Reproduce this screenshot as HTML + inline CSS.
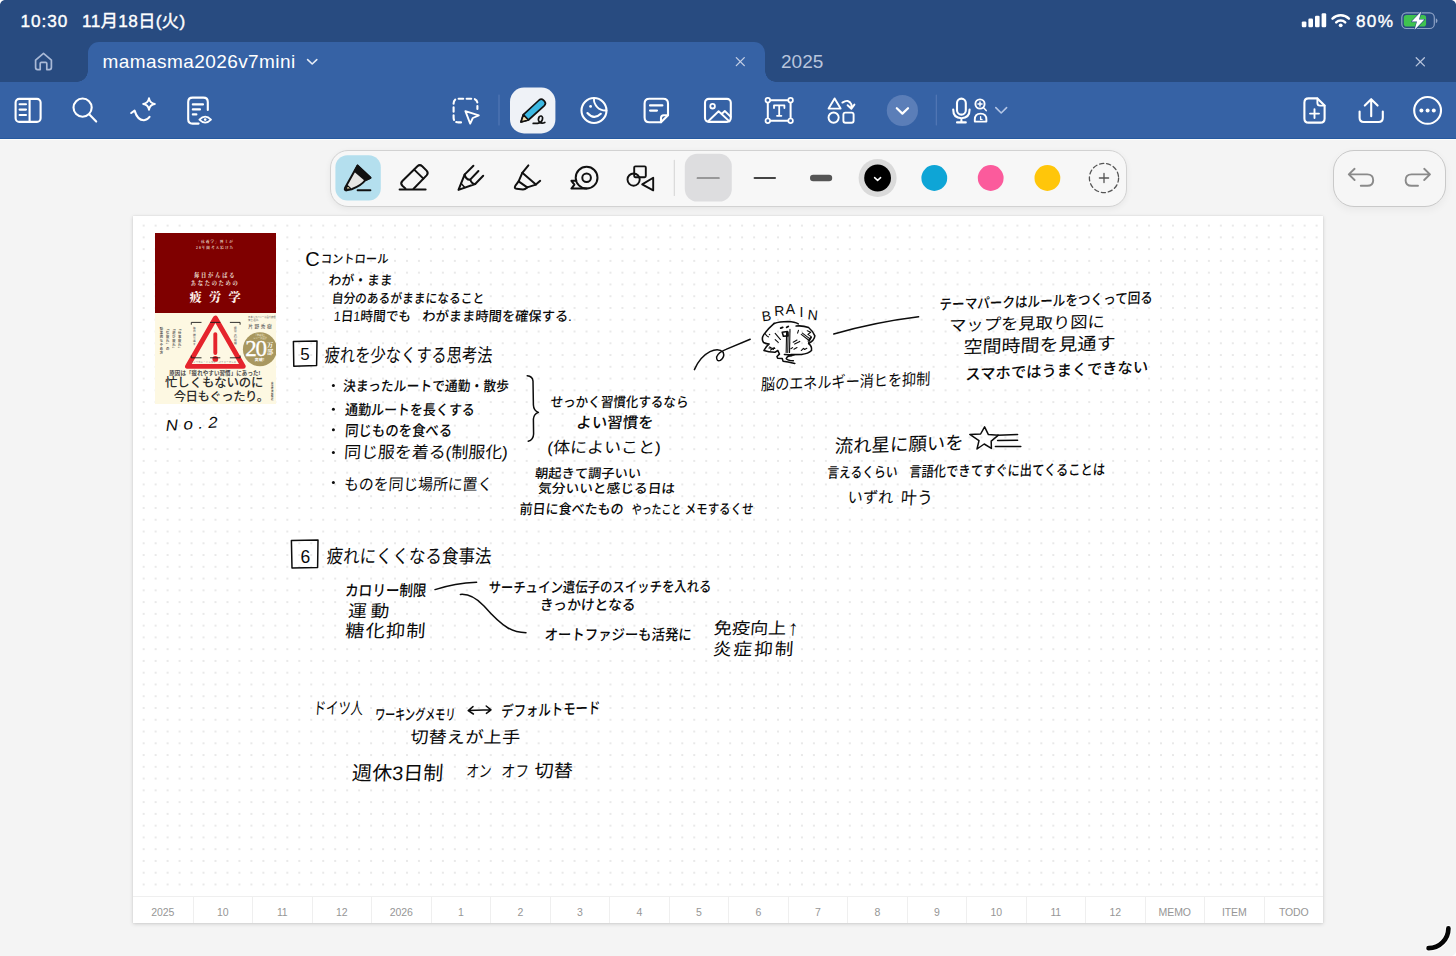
<!DOCTYPE html>
<html lang="ja">
<head>
<meta charset="utf-8">
<title>mamasma2026v7mini</title>
<style>
html,body{margin:0;padding:0}
body{width:1456px;height:956px;position:relative;overflow:hidden;background:#f4f4f4;
 font-family:"Liberation Sans","Noto Sans CJK JP",sans-serif;color:#fff}
.abs{position:absolute}
#status{position:absolute;left:0;top:0;width:1456px;height:42px;background:#284b80}
#tabs{position:absolute;left:0;top:42px;width:1456px;height:40px;background:#284b80}
#toolbar{position:absolute;left:0;top:82px;width:1456px;height:57px;background:#3662a5;border-bottom:1px solid #2559a0;box-sizing:border-box;box-shadow:0 1px 0 #fdfdfb}
#activetab{position:absolute;left:88px;top:0;width:677px;height:40px;background:#3662a5;border-radius:11px 11px 0 0}
#activetab:before,#activetab:after{content:"";position:absolute;bottom:0;width:11px;height:11px;background:radial-gradient(circle at 0 0,rgba(54,98,165,0) 10.5px,#3662a5 11px)}
#activetab:before{left:-11px}
#activetab:after{right:-11px;background:radial-gradient(circle at 100% 0,rgba(54,98,165,0) 10.5px,#3662a5 11px)}
.st{position:absolute;top:10px;font-size:17.2px;line-height:22px;font-weight:400;color:#fff;white-space:nowrap;-webkit-text-stroke:0.4px #fff;letter-spacing:0.9px}
#tabtitle{position:absolute;left:102.6px;top:49px;font-size:19px;line-height:26px;color:#fff;white-space:nowrap;letter-spacing:0.42px}
#tab2{position:absolute;left:781px;top:49px;font-size:19px;line-height:26px;color:#b9c5dc;white-space:nowrap}
svg{position:absolute;overflow:visible}
#pentools{position:absolute;left:330px;top:149.5px;width:797px;height:57px;box-sizing:border-box;background:#f7f7f7;border:1px solid #d2d2d2;border-radius:18px;box-shadow:0 2px 6px rgba(0,0,0,.06)}
#undoredo{position:absolute;left:1333px;top:149.5px;width:113px;height:57px;box-sizing:border-box;background:#f6f6f6;border:1px solid #c9c9c9;border-radius:21px;box-shadow:0 3px 8px rgba(0,0,0,.05)}
#page{position:absolute;left:133px;top:216px;width:1190px;height:707px;background:#fff;box-shadow:0 1px 4px rgba(0,0,0,.16),0 0 1px rgba(0,0,0,.12)}
#dots{position:absolute;left:0;top:0;width:1190px;height:675px;
 background-image:radial-gradient(circle,#d9d9d9 0.45px,rgba(217,217,217,0) 1.05px);background-size:11.976px 11.766px;background-position:4.7px 3.72px}
#months{position:absolute;left:0;top:680px;width:1190px;height:27px;border-top:1px solid #efefef;display:flex;box-sizing:border-box}
#months div{flex:0 0 59.5px;box-sizing:border-box;border-left:1px solid #efefef;text-align:center;font-size:10.5px;line-height:30px;color:#969696;letter-spacing:-0.1px}
#months div:first-child{border-left:0}

#cover{position:absolute;left:21.7px;top:17px;width:120.9px;height:171px;background:#fdf8e2;overflow:hidden;font-family:"Liberation Sans","Noto Sans CJK JP",sans-serif}
#cover .cr{position:absolute;left:0;top:0;width:100%;height:79.6px;background:#7f0000}
#cover .ct{position:absolute;left:0;width:100%;text-align:center;white-space:nowrap;line-height:1.2;font-family:"Liberation Serif","Noto Serif CJK JP",serif}
#cover .cl{position:absolute;white-space:nowrap;line-height:1.2}
#cover .cv{position:absolute;writing-mode:vertical-rl;white-space:nowrap;line-height:1;color:#555;font-weight:700}
</style>
</head>
<body>
<div id="status"></div>
<div id="tabs"><div id="activetab"></div></div>
<div id="toolbar"></div>
<div class="st" style="left:20.6px">10:30</div>
<div class="st" style="left:82px;letter-spacing:0.4px">11月18日(火)</div>
<div class="st" style="left:1356px;letter-spacing:1.3px">80%</div>
<div id="tabtitle">mamasma2026v7mini</div>
<div id="tab2">2025</div>

<!-- status right -->
<svg style="left:1300px;top:10px" width="140" height="22" viewBox="1300 10 140 22">
 <g fill="#fff">
  <rect x="1301.8" y="21.4" width="4.6" height="5.8" rx="1.2"/>
  <rect x="1308.4" y="18.5" width="4.6" height="8.7" rx="1.2"/>
  <rect x="1315" y="15.7" width="4.6" height="11.5" rx="1.2"/>
  <rect x="1321.6" y="13.2" width="4.6" height="14" rx="1.2"/>
  <circle cx="1340.7" cy="25.3" r="1.9"/>
 </g>
 <g fill="none" stroke="#fff" stroke-width="2.5" stroke-linecap="round">
  <path d="M1332.5 18.6 A11.6 11.6 0 0 1 1348.9 18.6"/>
  <path d="M1336.2 22.3 A6.4 6.4 0 0 1 1345.2 22.3"/>
 </g>
 <rect x="1401.8" y="12.9" width="32.5" height="15.6" rx="4.6" fill="none" stroke="#8fa3c6" stroke-width="1.2"/>
 <path d="M1435.8 18.2 q1.7 .6 1.7 2.5 t-1.7 2.5z" fill="#8fa3c6"/>
 <rect x="1403.8" y="14.9" width="22.3" height="11.6" rx="2.8" fill="#3fc34f"/>
 <path d="M1421.2 11.6 L1411.6 21.6 L1417 21.6 L1414.6 29.8 L1424.4 19.6 L1419 19.6 Z" fill="#fff" stroke="#284b80" stroke-width="1.1" stroke-linejoin="round" paint-order="stroke"/>
</svg>
<!-- tab bar icons -->
<svg style="left:30px;top:48px" width="28" height="28" viewBox="30 48 28 28" fill="none" stroke="#a9b9d6" stroke-width="1.7" stroke-linecap="round" stroke-linejoin="round">
 <path d="M35.6 60.2 L43.5 53.4 L51.4 60.2 V67.6 Q51.4 69.6 49.4 69.6 H46.8 V63.6 Q46.8 62.4 45.6 62.4 H41.4 Q40.2 62.4 40.2 63.6 V69.6 H37.6 Q35.6 69.6 35.6 67.6 Z"/>
</svg>
<svg style="left:300px;top:50px" width="24" height="24" viewBox="300 50 24 24" fill="none" stroke="#e6ecf6" stroke-width="1.6" stroke-linecap="round" stroke-linejoin="round">
 <path d="M307.6 59.6 L312.2 64 L316.8 59.6"/>
</svg>
<svg style="left:730px;top:52px" width="20" height="20" viewBox="730 52 20 20" fill="none" stroke="#c5d0e6" stroke-width="1.3" stroke-linecap="round">
 <path d="M736.3 57.6 L744.3 65.6 M744.3 57.6 L736.3 65.6"/>
</svg>
<svg style="left:1410px;top:52px" width="20" height="20" viewBox="1410 52 20 20" fill="none" stroke="#b9c5dc" stroke-width="1.3" stroke-linecap="round">
 <path d="M1416.2 57.7 L1424.4 65.9 M1424.4 57.7 L1416.2 65.9"/>
</svg>
<!-- toolbar icons -->
<svg style="left:0;top:82px" width="1456" height="56" viewBox="0 82 1456 56" fill="none" stroke="#fff" stroke-width="2.1" stroke-linecap="round" stroke-linejoin="round">
 <!-- sidebar -->
 <rect x="15.6" y="98.9" width="25" height="23" rx="3.6"/>
 <path d="M29.6 99 V122 M19.6 104.2 H26 M19.6 109.6 H26 M19.6 115 H26"/>
 <!-- search -->
 <circle cx="82.6" cy="107.6" r="9.1"/>
 <path d="M89.4 114.6 L96.2 121.6"/>
 <!-- ai smile -->
 <path d="M131.2 113 L134.6 110.6 Q137.6 120.4 144 120.2 Q147.6 120 149.6 116.8"/>
 <path d="M149 98.2 Q149.8 103.2 154.8 104 Q149.8 104.8 149 109.8 Q148.2 104.8 143.2 104 Q148.2 103.2 149 98.2Z" stroke-width="1.9"/>
 <!-- doc eye -->
 <path d="M198.6 123.6 H192.6 Q188.2 123.6 188.2 119.2 V102 Q188.2 97.6 192.6 97.6 H203.4 Q207.8 97.6 207.8 102 V110"/>
 <path d="M192.8 104.4 H203 M192.8 109.4 H200 M192.8 114.4 H196.4"/>
 <path d="M199.4 119.6 Q205.2 113.6 211 119.6 Q205.2 125.6 199.4 119.6Z" stroke-width="1.8"/>
 <circle cx="205.2" cy="119.6" r="1.3" fill="#fff" stroke="none"/>
 <!-- lasso select -->
 <path d="M461 122.4 H458.4 Q453.6 122.4 453.6 117.6 V103.6 Q453.6 98.8 458.4 98.8 H472.6 Q477.4 98.8 477.4 103.6 V109" stroke-dasharray="4.6 3.4"/>
 <path d="M465.4 111.2 L478.8 115.4 L472.8 118 L470.2 123.6 Z" stroke-width="1.9"/>
 <!-- separators -->
 <path d="M499 95 V125" stroke="#5579b6" stroke-width="1.1"/>
 <path d="M936.3 95 V125" stroke="#5579b6" stroke-width="1.1"/>
 <!-- selected pen bg -->
 <rect x="510" y="87.6" width="45.4" height="45.8" rx="14" fill="#eff2f7" stroke="none"/>
 <!-- sticker -->
 <circle cx="594" cy="110.5" r="12.5"/>
 <path d="M594 98.2 C593.4 105 599 111 606.4 110.5" stroke-width="1.9"/>
 <path d="M587.4 113 Q594 120.4 600.8 113.8"/>
 <circle cx="590.6" cy="106.4" r="1.4" fill="#fff" stroke="none"/>
 <!-- note -->
 <path d="M661 122.2 H649.4 Q644.6 122.2 644.6 117.4 V103.6 Q644.6 98.8 649.4 98.8 H663.2 Q668 98.8 668 103.6 V115.2 Z"/>
 <path d="M661 122.2 V118 Q661 115.2 663.8 115.2 H668" />
 <path d="M650 105.4 H662.4 M650 110.6 H657"/>
 <!-- image -->
 <rect x="705" y="98.9" width="25.8" height="23" rx="3.8"/>
 <circle cx="712.6" cy="106.2" r="2.3" stroke-width="1.8"/>
 <path d="M708.2 121.2 L718.6 111.2 L729.4 121.4 M721.6 114 L724.8 111 L730.6 116.6" stroke-width="1.9"/>
 <!-- text box -->
 <rect x="767.8" y="100.2" width="22.8" height="20.6" stroke-width="2"/>
 <g fill="#3662a5" stroke-width="1.7"><circle cx="767.8" cy="100.2" r="2.3"/><circle cx="790.6" cy="100.2" r="2.3"/><circle cx="767.8" cy="120.8" r="2.3"/><circle cx="790.6" cy="120.8" r="2.3"/></g>
 <path d="M774 108 V105.4 H784.4 V108 M779.2 105.4 V115.8 M777 115.8 H781.4" stroke-width="1.8"/>
 <!-- shapes -->
 <path d="M834.6 98.4 L840.6 108.6 H828.6 Z" stroke-width="1.9"/>
 <circle cx="833.6" cy="117.6" r="5.1" stroke-width="1.9"/>
 <rect x="843.4" y="112.6" width="10.2" height="10.2" rx="2" stroke-width="1.9"/>
 <path d="M842.4 102.6 Q848.6 98.4 851.4 104.4 L851.6 108 M847.6 105.2 L851.4 108.8 L854.4 104.6" stroke-width="1.9"/>
 <!-- more tools circle -->
 <circle cx="902.4" cy="110.5" r="15.6" fill="#5b7eb8" stroke="none"/>
 <path d="M896.8 108.2 L902.4 113.6 L908 108.2" stroke-width="2.2"/>
 <!-- mic -->
 <rect x="957" y="98.6" width="8.8" height="16" rx="4.4"/>
 <path d="M953.2 109.6 Q953.2 118.2 961.4 118.2 Q969.6 118.2 969.6 109.6 M961.4 118.4 V122.2 M957 122.4 H965.8"/>
 <!-- person search -->
 <circle cx="980" cy="104" r="4.6" stroke-width="1.9"/>
 <path d="M983.4 107.6 L986.2 110.6 M978 104 H982 M980 102 V106" stroke-width="1.5"/>
 <path d="M974.8 121.6 V119.6 Q974.8 113.6 980.6 113.6 Q986.4 113.6 986.4 119.6 V121.6 Z" stroke-width="1.9"/>
 <path d="M980.6 116.6 V119.4 H982" stroke-width="1.3"/>
 <path d="M995.8 107.6 L1001.2 113 L1006.6 107.6" stroke="#b4c6e6" stroke-width="1.6"/>
 <!-- new page -->
 <path d="M1317.4 98.4 H1308.6 Q1304.4 98.4 1304.4 102.6 V118.4 Q1304.4 122.6 1308.6 122.6 H1320.4 Q1324.6 122.6 1324.6 118.4 V105.6 Z"/>
 <path d="M1317.4 98.4 V103 Q1317.4 105.6 1320 105.6 H1324.6" stroke-width="1.9"/>
 <path d="M1310 113.6 H1319 M1314.5 109.1 V118.1" stroke-width="1.9"/>
 <!-- share -->
 <path d="M1359.6 111.6 V117.8 Q1359.6 122 1363.8 122 H1378.6 Q1382.8 122 1382.8 117.8 V111.6"/>
 <path d="M1371.2 116.2 V99.4 M1364.8 105.6 L1371.2 99.2 L1377.6 105.6"/>
 <!-- more -->
 <circle cx="1427.6" cy="110.4" r="13.4"/>
 <g fill="#fff" stroke="none"><circle cx="1421.4" cy="110.4" r="2"/><circle cx="1427.6" cy="110.4" r="2"/><circle cx="1433.8" cy="110.4" r="2"/></g>
</svg>
<!-- selected pen icon (toolbar) -->
<svg style="left:510px;top:87px" width="46" height="47" viewBox="510 87 46 47" fill="none" stroke="#111" stroke-width="1.7" stroke-linecap="round" stroke-linejoin="round">
 <path d="M521 122 L523.4 114.6 L539.2 100 Q541.4 98.2 543.4 100.2 L544.6 101.4 Q546.4 103.6 544.4 105.6 L528.4 120 Z" fill="#3db9e3"/>
 <path d="M523.4 114.6 L528.4 120 L521 122 Z" fill="#f3dfae"/>
 <path d="M533.2 123.4 H537.6 Q542.8 122.4 542.6 117.8 Q541.6 114.8 539.2 116.8 Q537.4 119.8 539.6 122.2 Q541.8 123.8 544.8 122.4"/>
</svg>

<div id="pentools"></div>
<div id="undoredo"></div>

<svg style="left:330px;top:149px" width="800" height="58" viewBox="330 149 800 58" fill="none" stroke="#111" stroke-width="2" stroke-linecap="round" stroke-linejoin="round">
 <!-- selected pen bg -->
 <rect x="335.4" y="155.2" width="45.4" height="45.4" rx="12" fill="#b4dfee" stroke="none"/>
 <!-- pen -->
 <path d="M357.6 165.6 L370.4 177.8 L365.4 180 Q361.6 185.4 351.6 189.2 L346.4 190.4 Q344.2 190.2 345 188 Z" fill="#e6e6e4"/>
 <path d="M357.6 165.6 L370.4 177.8 L365.6 180.2 L354.8 171 Z" fill="#111"/>
 <path d="M345.8 189.6 L347.6 185.6 L350.6 188.4 Z" fill="#f3e3b5" stroke-width="1.2"/>
 <path d="M357.6 190.2 H370.4" stroke-width="1.9"/>
 <!-- eraser -->
 <path d="M405.4 188.6 L402.4 185.8 Q400 183.4 402.4 181 L417.4 166.2 Q419.8 164 422.2 166.2 L426.6 170.6 Q428.8 173 426.6 175.4 L413.6 188.8"/>
 <path d="M414.2 169.6 L423.4 178.6"/>
 <path d="M399.6 189.5 H425.6"/>
 <!-- pencil -->
 <path d="M464.6 174.6 L473.4 165.8 M470.2 179.6 L478.4 171 M475.2 184 L483.2 175.8"/>
 <path d="M464.6 174.6 L458.5 189.9 L475.2 184 Q472.2 184.6 470.2 179.6 Q466.4 180.2 464.6 174.6"/>
 <path d="M461.2 183.4 L464.8 187.4" stroke-width="1.5"/>
 <!-- highlighter -->
 <path d="M528.4 165.4 L522.3 172.8 L535.9 184.6 L540.2 180.8"/>
 <path d="M522.3 172.8 L518.6 181.4 L527.2 187.4 L535.9 184.6"/>
 <path d="M518.6 181.4 L515.4 185.6 Q513.8 188.6 516.6 188.8 L523 189.4 Q525 189.4 527.2 187.4"/>
 <!-- tape -->
 <circle cx="586.6" cy="177.7" r="10.9"/>
 <circle cx="586.6" cy="177.7" r="4.3"/>
 <path d="M586.6 188.6 H571.4 L574.4 184.6 L571.4 180.8 H576.2"/>
 <!-- shapes -->
 <rect x="634.2" y="166.4" width="11.6" height="10.8" rx="1.2" stroke-width="1.9"/>
 <circle cx="633.6" cy="179.6" r="6.1" stroke-width="1.9"/>
 <path d="M653.2 177.8 V190.4 L642.2 184.4 Z" stroke-width="1.9"/>
 <!-- separator -->
 <path d="M674.3 160.4 V195.4" stroke="#d6d6d6" stroke-width="1.1"/>
 <!-- stroke widths -->
 <rect x="684.8" y="153.8" width="47" height="47.8" rx="12.5" fill="#dddddf" stroke="none"/>
 <path d="M697.2 178 H719.2" stroke="#555" stroke-width="1.1"/>
 <path d="M754.6 178 H775" stroke="#444" stroke-width="2.1"/>
 <path d="M813.2 178 H829" stroke="#555" stroke-width="6.4"/>
 <!-- colours -->
 <circle cx="877.6" cy="178" r="19" fill="#dadada" stroke="none"/>
 <circle cx="877.6" cy="178" r="13.4" fill="#000" stroke="none"/>
 <path d="M874.6 177.6 L877.6 180.4 L880.6 177.6" stroke="#fff" stroke-width="1.5"/>
 <circle cx="934.3" cy="178" r="12.9" fill="#0ea5d6" stroke="none"/>
 <circle cx="990.7" cy="178" r="12.9" fill="#fb5b9c" stroke="none"/>
 <circle cx="1047.4" cy="178" r="12.9" fill="#ffc60a" stroke="none"/>
 <circle cx="1104" cy="178" r="14.6" stroke="#555" stroke-width="1.3" stroke-dasharray="4.2 2.9"/>
 <path d="M1099.4 178 H1108.6 M1104 173.4 V182.6" stroke="#555" stroke-width="1.3"/>
</svg>
<svg style="left:1333px;top:149px" width="114" height="58" viewBox="1333 149 114 58" fill="none" stroke="#8a8a8a" stroke-width="1.9" stroke-linecap="round" stroke-linejoin="round">
 <path d="M1354.6 168.8 L1348.8 174.4 L1354.6 180 M1349.4 174.4 H1367.2 Q1373.2 174.4 1373.2 180.2 Q1373.2 185.8 1367.2 185.8 H1360.8"/>
 <path d="M1424.2 168.8 L1430 174.4 L1424.2 180 M1429.4 174.4 H1411.6 Q1405.6 174.4 1405.6 180.2 Q1405.6 185.8 1411.6 185.8 H1418"/>
</svg>

<div id="page">
 <div id="dots"></div>
 <div id="cover">
  <div class="cr"></div>
  <div class="ct" style="top:7.4px;font-size:3.6px;letter-spacing:1.1px;color:#e9d9c9;font-weight:700">「休養学」博士が</div>
  <div class="ct" style="top:12.8px;font-size:3.6px;letter-spacing:1.05px;color:#e9d9c9;font-weight:700">20年間考え続けた</div>
  <div class="ct" style="top:39.4px;font-size:5.2px;letter-spacing:1.85px;color:#e6d5c6;font-weight:900">毎日がんばる</div>
  <div class="ct" style="top:46.8px;font-size:5.2px;letter-spacing:1.75px;color:#e6d5c6;font-weight:900">あなたのための</div>
  <div class="ct" style="top:58.4px;font-size:12.2px;letter-spacing:7.4px;color:#fbeee6;font-weight:900;text-indent:7.4px">疲労学</div>
  <svg style="left:0;top:79.5px" width="121" height="92" viewBox="154.7 312.5 121 92">
   <circle cx="259.6" cy="348.8" r="17" fill="#a8975f"/>
   <path d="M215.1 317.6 L187.2 365.9 H243 Z" fill="#fdf8e4" stroke="#e5242c" stroke-width="4.9" stroke-linejoin="round"/>
   <path d="M215 333.6 V352.6" stroke="#e5242c" stroke-width="3.9" stroke-linecap="round"/>
   <circle cx="215" cy="358.4" r="2.9" fill="#e5242c"/>
   <g fill="none" stroke="#1a1a1a" stroke-width="0.9">
    <path d="M191 324.2 V321.9 H201.2 M209.8 321.9 H220 M229.6 321.9 H239.8 V324.2"/>
    <path d="M191 355 V357.3 H201.2 M209.8 357.3 H220 M229.6 357.3 H239.8 V355"/>
   </g>
  </svg>
  <div class="cv" style="left:4px;top:94.2px;font-size:3.3px;letter-spacing:.7px;height:40px">効果的なやめ方</div>
  <div class="cv" style="left:10.2px;top:94.2px;font-size:3.3px;letter-spacing:.7px;height:40px">「気疲れ」の</div>
  <div class="cv" style="left:16.3px;top:94.2px;font-size:3.3px;letter-spacing:.7px;height:40px">「遊び疲れ」</div>
  <div class="cv" style="left:22.2px;top:94.2px;font-size:3.3px;letter-spacing:.7px;height:40px">「仕事疲れ」</div>
  <div class="cv" style="left:37px;top:94.4px;font-size:2.7px;letter-spacing:.4px;height:24px;color:#777">毎日繰り返す</div>
  <div class="cv" style="left:78px;top:94.4px;font-size:2.7px;letter-spacing:.4px;height:24px;color:#777">疲労の2段階</div>
  <div class="cl" style="left:93.4px;top:82.6px;font-size:2.3px;line-height:3px;color:#666;width:27px">日本リカバリー協会代表理事<br>博士(医学)</div>
  <div class="cl" style="left:93.6px;top:90.6px;font-size:4.7px;letter-spacing:1.55px;color:#666;font-weight:500">片野秀樹</div>
  <div class="cl" style="left:95.4px;top:100.6px;font-size:2.3px;line-height:3.2px;color:#f5efdc;width:20px;text-align:center">『休養学』<br>シリーズ累計</div>
  <div class="cl" style="left:90.6px;top:103.9px;font-size:23px;line-height:23px;-webkit-text-stroke:.3px #fff;color:#fff;font-family:'Liberation Serif','Noto Serif CJK JP',serif;letter-spacing:-1.4px">20</div>
  <div class="cl" style="left:112.4px;top:108px;font-size:6.2px;line-height:7.2px;color:#fff;font-weight:700;font-family:'Liberation Serif','Noto Serif CJK JP',serif;width:5px">万<br>部</div>
  <div class="cl" style="left:100px;top:124.6px;font-size:3.9px;color:#fff;font-weight:700;letter-spacing:.3px">突破!</div>
  <div class="cl" style="left:36px;top:128.4px;font-size:2.2px;color:#666;letter-spacing:.35px">フィジカル・メンタル・パフォーマンス</div>
  <div class="cl" style="left:14.6px;top:136.4px;font-size:5.5px;line-height:8px;letter-spacing:.08px;color:#4a4a4a;font-weight:700">原因は「疲れやすい習慣」にあった!</div>
  <div class="cl" style="left:10.4px;top:143.4px;font-size:12.4px;line-height:15px;letter-spacing:-.1px;color:#2b2b2b;font-weight:500">忙しくもないのに</div>
  <div class="cl" style="left:19px;top:157.2px;font-size:12.4px;line-height:15px;letter-spacing:-.5px;color:#2b2b2b;font-weight:500">今日もぐったり。</div>
  <div class="cv" style="left:115px;top:149.4px;font-size:2.4px;letter-spacing:.2px;height:22px;color:#555">東洋経済新報社</div>
 </div>
 <div id="months"><div>2025</div><div>10</div><div>11</div><div>12</div><div>2026</div><div>1</div><div>2</div><div>3</div><div>4</div><div>5</div><div>6</div><div>7</div><div>8</div><div>9</div><div>10</div><div>11</div><div>12</div><div>MEMO</div><div>ITEM</div><div>TODO</div></div>
</div>
<div style="position:absolute;left:0;top:0;width:5px;height:5px;background:radial-gradient(circle at 100% 100%,rgba(255,255,255,0) 4.5px,#fff 5.3px)"></div>
<div style="position:absolute;left:1451px;top:0;width:5px;height:5px;background:radial-gradient(circle at 0 100%,rgba(255,255,255,0) 4.5px,#fff 5.3px)"></div>
<div style="position:absolute;left:1451px;top:951px;width:5px;height:5px;background:radial-gradient(circle at 0 0,rgba(255,255,255,0) 4.5px,#fff 5.3px)"></div>
<svg style="left:1416px;top:916px" width="40" height="40" viewBox="1416 916 40 40" fill="none" stroke-linecap="round">
 <path d="M1428.6 948.2 A20 20 0 0 0 1448.4 928.4" stroke="#fff" stroke-width="6.6"/>
 <path d="M1428.6 948.2 A20 20 0 0 0 1448.4 928.4" stroke="#050505" stroke-width="4.7"/>
</svg>
<!--INK-START-->
<svg id="ink" style="left:0;top:0" width="1456" height="956" viewBox="0 0 1456 956">
<g font-family="'Liberation Sans','Noto Sans CJK JP',sans-serif" font-weight="500" fill="#0a0a0a">
<text transform="translate(305.2 266.0)" font-size="20" font-weight="400">C</text>
<text transform="translate(320.5 263.4) skewX(-4)" font-size="11.8" textLength="67.7" lengthAdjust="spacingAndGlyphs">コントロール</text>
<text transform="translate(328.3 284.6) skewX(-4)" font-size="13.5" textLength="63.9" lengthAdjust="spacingAndGlyphs">わが・まま</text>
<text transform="translate(331.4 302.6) skewX(-4)" font-size="13.2" textLength="152.5" lengthAdjust="spacingAndGlyphs">自分のあるがままになること</text>
<text transform="translate(333.4 321.2) skewX(-4)" font-size="13.6" textLength="77.3" lengthAdjust="spacingAndGlyphs">1日1時間でも</text>
<text transform="translate(422.0 321.2) skewX(-4)" font-size="13.6" textLength="149.6" lengthAdjust="spacingAndGlyphs">わがまま時間を確保する.</text>
<text transform="translate(300.2 360.4)" font-size="17" font-weight="400">5</text>
<text transform="translate(324.2 362.4) skewX(-4)" font-size="19" textLength="167.8" lengthAdjust="spacingAndGlyphs" font-weight="400">疲れを少なくする思考法</text>
<text transform="translate(342.7 391.0) skewX(-4)" font-size="14" textLength="165.8" lengthAdjust="spacingAndGlyphs">決まったルートで通勤・散歩</text>
<text transform="translate(344.7 414.6) skewX(-4)" font-size="14.5" textLength="129.8" lengthAdjust="spacingAndGlyphs">通勤ルートを長くする</text>
<text transform="translate(344.7 436.2) skewX(-4)" font-size="15" textLength="107.2" lengthAdjust="spacingAndGlyphs">同じものを食べる</text>
<text transform="translate(343.7 458.0) skewX(-4)" font-size="16.5" textLength="163.8" lengthAdjust="spacingAndGlyphs" font-weight="400">同じ服を着る(制服化)</text>
<text transform="translate(343.7 489.6) skewX(-4)" font-size="16" textLength="148.3" lengthAdjust="spacingAndGlyphs" font-weight="400">ものを同じ場所に置く</text>
<text transform="translate(550.2 407.2) skewX(-4)" font-size="14" textLength="138.0" lengthAdjust="spacingAndGlyphs">せっかく習慣化するなら</text>
<text transform="translate(576.0 428.0) skewX(-4)" font-size="15.5" textLength="77.2" lengthAdjust="spacingAndGlyphs">よい習慣を</text>
<text transform="translate(547.0 452.6) skewX(-4)" font-size="16" textLength="113.4" lengthAdjust="spacingAndGlyphs" font-weight="400">(体によいこと)</text>
<text transform="translate(534.7 478.0) skewX(-4)" font-size="13" textLength="106.1" lengthAdjust="spacingAndGlyphs">朝起きて調子いい</text>
<text transform="translate(537.8 493.0) skewX(-4)" font-size="13" textLength="137.0" lengthAdjust="spacingAndGlyphs">気分いいと感じる日は</text>
<text transform="translate(519.3 513.6) skewX(-4)" font-size="14" textLength="104.0" lengthAdjust="spacingAndGlyphs">前日に食べたもの</text>
<text transform="translate(631.6 513.6) skewX(-4)" font-size="13" textLength="49.4" lengthAdjust="spacingAndGlyphs">やったこと</text>
<text transform="translate(684.4 513.6) skewX(-4)" font-size="14" textLength="68.7" lengthAdjust="spacingAndGlyphs">メモするくせ</text>
<text transform="translate(760.8 390.2) rotate(-1.90) skewX(-4)" font-size="16" textLength="169.3" lengthAdjust="spacingAndGlyphs" font-weight="400">脳のエネルギー消ヒを抑制</text>
<text transform="translate(939.2 309.8) rotate(-1.88) skewX(-4)" font-size="14.5" textLength="213.6" lengthAdjust="spacingAndGlyphs">テーマパークはルールをつくって回る</text>
<text transform="translate(948.8 331.2) rotate(-1.47) skewX(-4)" font-size="16" textLength="155.9" lengthAdjust="spacingAndGlyphs" font-weight="400">マップを見取り図に</text>
<text transform="translate(963.3 353.2) rotate(-1.43) skewX(-4)" font-size="17.5" textLength="151.9" lengthAdjust="spacingAndGlyphs" font-weight="400">空間時間を見通す</text>
<text transform="translate(965.2 380.0) rotate(-2.38) skewX(-4)" font-size="15.5" textLength="182.9" lengthAdjust="spacingAndGlyphs">スマホではうまくできない</text>
<text transform="translate(834.5 452.8) rotate(-1.60) skewX(-4)" font-size="18.5" textLength="128.9" lengthAdjust="spacingAndGlyphs" font-weight="400">流れ星に願いを</text>
<text transform="translate(827.0 477.8) rotate(-0.65) skewX(-4)" font-size="14.5" textLength="70.3" lengthAdjust="spacingAndGlyphs">言えるくらい</text>
<text transform="translate(909.0 476.8) rotate(-0.64) skewX(-4)" font-size="14.5" textLength="195.9" lengthAdjust="spacingAndGlyphs">言語化できてすぐに出てくることは</text>
<text transform="translate(847.3 503.0) skewX(-4)" font-size="16" textLength="45.7" lengthAdjust="spacingAndGlyphs" font-weight="400">いずれ</text>
<text transform="translate(900.5 503.6) skewX(-4)" font-size="17.5" textLength="31.9" lengthAdjust="spacingAndGlyphs" font-weight="400">叶う</text>
<text transform="translate(300.4 562.6)" font-size="17.5" font-weight="400">6</text>
<text transform="translate(326.2 562.6) skewX(-4)" font-size="19" textLength="164.8" lengthAdjust="spacingAndGlyphs" font-weight="400">疲れにくくなる食事法</text>
<text transform="translate(344.8 595.6) skewX(-4)" font-size="15.5" textLength="81.4" lengthAdjust="spacingAndGlyphs">カロリー制限</text>
<text transform="translate(347.8 617.0) skewX(-4) scale(1.1 1)" font-size="17" textLength="37.5" lengthAdjust="spacing" font-weight="400">運動</text>
<text transform="translate(344.8 637.4) skewX(-4) scale(1.1 1)" font-size="17.5" textLength="73.0" lengthAdjust="spacing" font-weight="400">糖化抑制</text>
<text transform="translate(488.2 592.8) rotate(-0.31) skewX(-4)" font-size="14.5" textLength="223.0" lengthAdjust="spacingAndGlyphs">サーチュイン遺伝子のスイッチを入れる</text>
<text transform="translate(539.6 610.4) skewX(-4)" font-size="14.5" textLength="95.7" lengthAdjust="spacingAndGlyphs">きっかけとなる</text>
<text transform="translate(544.2 640.4) skewX(-4)" font-size="15" textLength="147.2" lengthAdjust="spacingAndGlyphs">オートファジーも活発に</text>
<text transform="translate(713.5 634.2) skewX(-4)" font-size="16.5" textLength="72.5" lengthAdjust="spacingAndGlyphs" font-weight="400">免疫向上</text>
<text transform="translate(787.6 635.4) skewX(-4)" font-size="21" font-weight="400">↑</text>
<text transform="translate(712.4 654.6) skewX(-4) scale(1.1 1)" font-size="17" textLength="73.3" lengthAdjust="spacing" font-weight="400">炎症抑制</text>
<text transform="translate(313.2 714.0) skewX(-4)" font-size="16.5" textLength="49.4" lengthAdjust="spacingAndGlyphs" font-weight="400">ドイツ人</text>
<text transform="translate(374.7 719.6) skewX(-4)" font-size="15" textLength="80.3" lengthAdjust="spacingAndGlyphs">ワーキングメモリ</text>
<text transform="translate(501.1 717.0) rotate(-2.08) skewX(-4)" font-size="15.5" textLength="99.0" lengthAdjust="spacingAndGlyphs">デフォルトモード</text>
<text transform="translate(409.9 743.4) skewX(-4) scale(1.1 1)" font-size="16.5" textLength="99.9" lengthAdjust="spacing" font-weight="400">切替えが上手</text>
<text transform="translate(351.6 780.0) skewX(-4)" font-size="19.5" textLength="91.3" lengthAdjust="spacingAndGlyphs" font-weight="400">週休3日制</text>
<text transform="translate(465.9 776.6) skewX(-4)" font-size="16.5" textLength="25.3" lengthAdjust="spacingAndGlyphs" font-weight="400">オン</text>
<text transform="translate(501.1 776.6) skewX(-4)" font-size="16.5" textLength="27.5" lengthAdjust="spacingAndGlyphs" font-weight="400">オフ</text>
<text transform="translate(534.0 776.8) skewX(-4)" font-size="17.5" textLength="38.5" lengthAdjust="spacingAndGlyphs" font-weight="400">切替</text>
<text transform="translate(166.0 431.0) rotate(-3.96) scale(1.1 1)" font-size="15.5" textLength="47.4" lengthAdjust="spacing" font-style="italic">No.2</text>
<text x="762.4 774.6 785.8 799.6 807.2" y="321.4 316 313.8 316.8 319.2" rotate="-8 -3 0 0 6" font-size="14" font-weight="400">BRAIN</text>
</g>
<g fill="none" stroke="#0c0c0c" stroke-width="1.5" stroke-linecap="round" stroke-linejoin="round">
<!-- boxes -->
<path d="M293.4 341.6 L317 341 L316.6 365.4 L293.8 366.2 Z"/>
<path d="M291.4 540.6 L318 540 L317.6 567.4 L292 568 Z"/>
<!-- bullets -->
<g fill="#0c0c0c" stroke="none"><circle cx="333.4" cy="385.6" r="1.5"/><circle cx="333.4" cy="409.2" r="1.5"/><circle cx="333.4" cy="429.8" r="1.5"/><circle cx="333.4" cy="452.6" r="1.5"/><circle cx="333.4" cy="482.4" r="1.5"/></g>
<!-- brace -->
<path d="M527.2 375.8 Q532.6 376.4 533 381 L533.4 405 Q533.6 410.6 538.4 412.4 Q533.8 414 533.4 419 L533.6 434 Q533.4 440 528.2 441.2"/>
<!-- swoosh -->
<path d="M694.4 369.6 Q700 356.6 710 351.6 Q718.6 347.6 723.2 352.2 Q725 357 720.4 360.4 Q716.4 361.8 716.6 357 Q718.2 352.4 726 349.4 L750.2 339.2"/>
<!-- line brain -> theme park -->
<path d="M833.8 334 Q876 322 918.6 316.8"/>
<!-- brain -->
<g transform="translate(750 300) scale(0.07321)" stroke-width="21">
<path d="M330 320 Q400 298 520 295 Q610 298 660 326 M630 356 Q720 346 800 376 Q862 428 886 490 Q878 552 800 596 Q850 632 840 690 Q800 732 700 745 L560 746"/>
<path d="M330 320 Q250 388 190 470 Q150 530 185 580 Q222 600 262 600 Q212 640 190 690 Q250 712 340 715 L380 690 L402 740 L368 772 L378 796 L440 800 L452 836 L520 846 L612 866"/>
<path d="M572 760 Q510 760 495 800 Q512 828 592 830 M470 745 L600 750"/>
<path d="M500 440 L494 716 M520 438 L516 716 M546 400 L540 716" stroke-width="15"/>
<path d="M440 440 L512 430 L520 490 L456 496 Z"/>
<path d="M420 384 L446 374 M502 372 L522 362" stroke-width="26"/>
<path d="M208 462 Q228 500 252 504 M264 470 L270 474 M344 456 L416 540 M344 540 L386 580 M258 656 L340 662 M282 684 L332 650 M270 640 L320 676" stroke-width="15"/>
<path d="M662 414 L650 452 M700 470 L790 540 M716 452 L806 520 M782 420 L830 440 L790 470 L836 500 L792 560 M840 510 L800 580 M590 576 L642 546 M610 602 L680 566 M558 666 L582 650 M600 672 L642 650 M700 690 L730 660 L746 676 L776 660" stroke-width="15"/>
</g>
<!-- star -->
<path d="M984.6 426.8 L988.4 434.6 L998.4 435.2 L991.2 441.2 L991.4 448.4 L984.2 444 L977 449 L979 440.6 L969.8 434.4 L980.6 434 Z"/>
<path d="M997.6 435.2 L1017.6 434.6 M997.6 440.6 L1017.6 440.2 M995.4 446.6 L1020.8 446.4"/>
<!-- lines section 6 -->
<path d="M435 589.6 Q455 583 476.6 582.2"/>
<path d="M460.4 594.4 Q472 593.4 484 606 Q498 622 508 628 Q516 632.6 526 632.8"/>
<!-- arrow <-> -->
<path d="M473 706.6 L468.2 710.6 L473.4 714 M468.6 710.6 L490.8 709.8 M486.2 706 L491 709.8 L486.4 713.4"/>

</g>
</svg>
<!--INK-END-->
</body>
</html>
